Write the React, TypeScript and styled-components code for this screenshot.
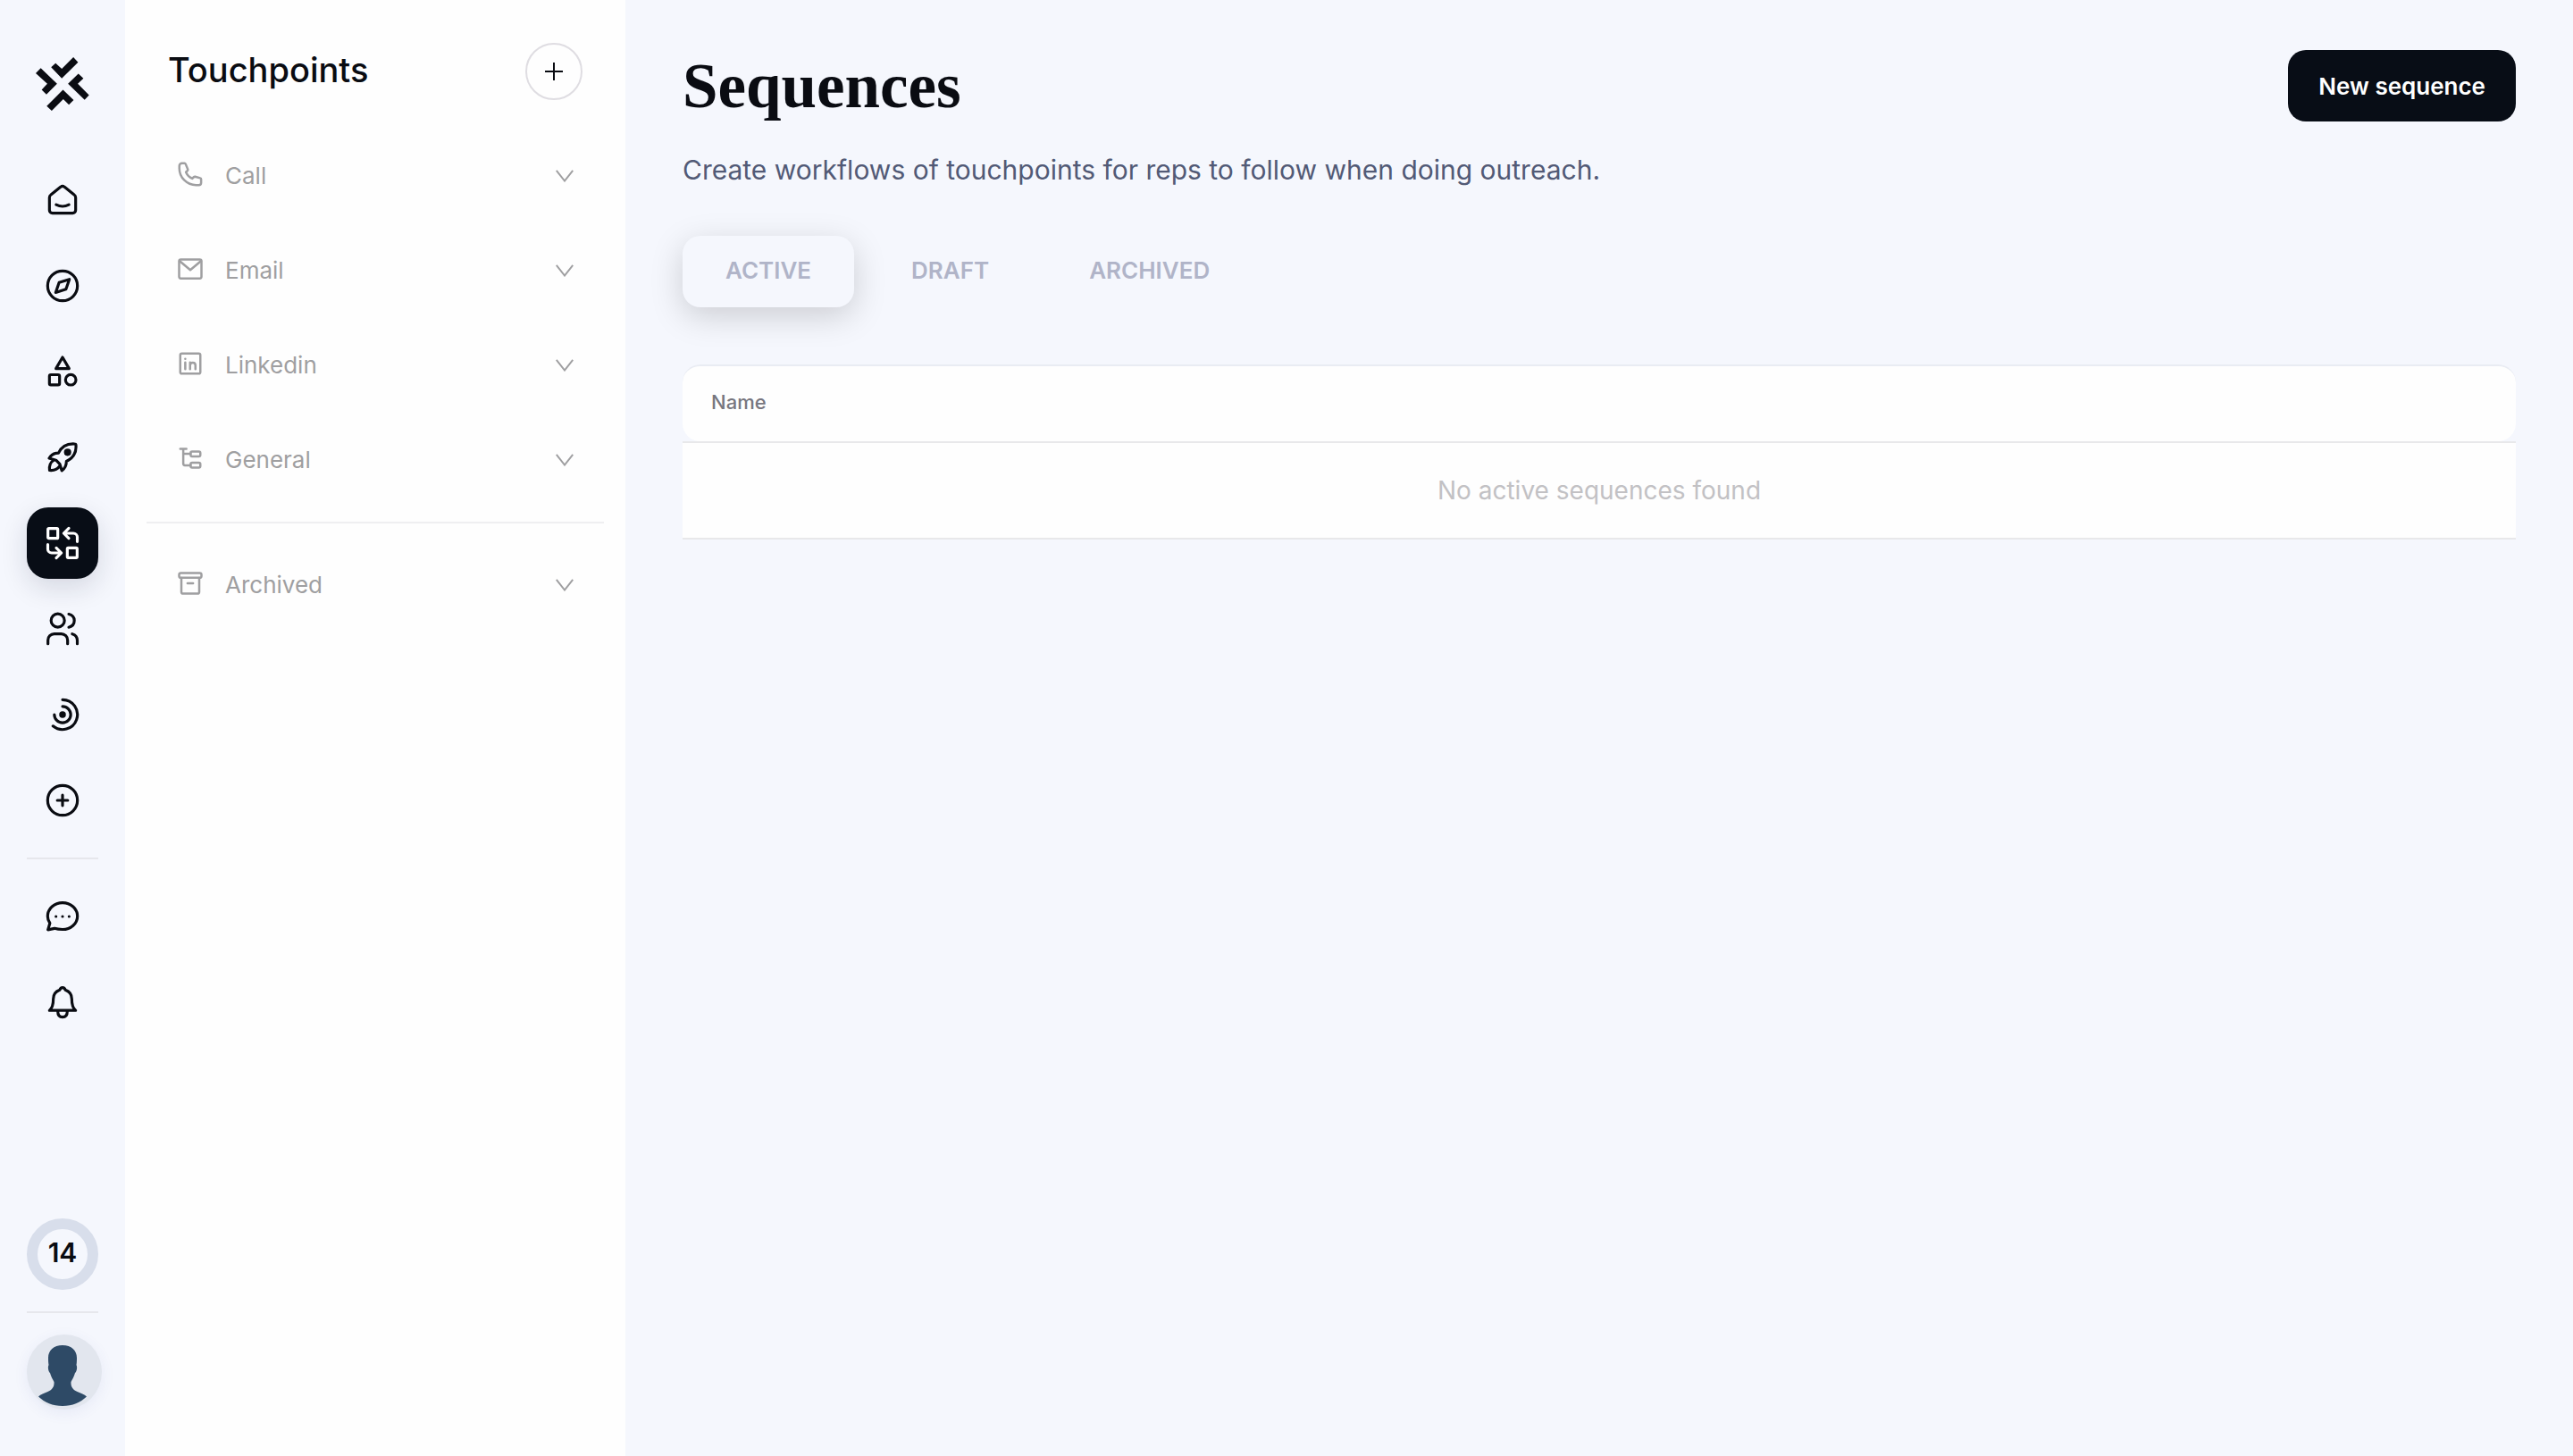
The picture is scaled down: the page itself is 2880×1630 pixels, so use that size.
import React from "react";
import styled, { createGlobalStyle, css } from "styled-components";

const color = {
  canvas: "#f5f7fd",
  panel: "#fefefe",
  ink: "#0a0c12",
  button: "#080d16",
  muted: "#9f9fa1",
  subtitle: "#525a76",
  tab: "#b0b4c8",
  line: "#e6e7ec",
};

const GlobalStyle = createGlobalStyle`
  *, *::before, *::after { box-sizing: border-box; }
  body {
    margin: 0;
    background: ${color.canvas};
    color: ${color.ink};
    font-family: Inter, "Liberation Sans", sans-serif;
  }
  button { font: inherit; border: 0; background: none; cursor: pointer; }
`;

const Shell = styled.div`
  display: flex;
  min-height: 100vh;
`;

/* ---------- navigation rail ---------- */

const Rail = styled.nav`
  flex: 0 0 140px;
  display: flex;
  flex-direction: column;
  align-items: center;
  padding: 64px 0 52px;
`;

const Logo = styled.a`
  display: block;
  height: 60px;
  margin-bottom: 60px;
  color: ${color.ink};
`;

const RailGroup = styled.ul`
  display: flex;
  flex-direction: column;
  gap: 16px;
  margin: 0;
  padding: 0;
  list-style: none;
`;

const RailLink = styled.a<{ $active?: boolean }>`
  display: flex;
  align-items: center;
  justify-content: center;
  width: 80px;
  height: 80px;
  border-radius: 24px;
  color: ${color.ink};
  ${(p) =>
    p.$active &&
    css`
      color: #fff;
      background: ${color.button};
      box-shadow: 0 10px 30px rgba(20, 28, 60, 0.14);
    `}
`;

const RailLine = styled.hr`
  width: 80px;
  height: 2px;
  margin: 24px 0;
  border: 0;
  background: ${color.line};
`;

const RailFoot = styled.div`
  display: flex;
  flex-direction: column;
  align-items: flex-start;
  width: 80px;
  margin-top: auto;
`;

const DaysRing = styled.button`
  width: 80px;
  height: 80px;
  padding: 0 0 4px;
  border: 12px solid #d8deeb;
  border-radius: 50%;
  font-size: 30px;
  font-weight: 600;
  line-height: 52px;
  color: ${color.ink};
`;

const Avatar = styled.button`
  width: 84px;
  height: 84px;
  padding: 0;
  border-radius: 50%;
  overflow: hidden;
  background: #e2e6ee;
  box-shadow: 0 4px 16px rgba(60, 80, 160, 0.08);
`;

/* ---------- touchpoints panel ---------- */

const Panel = styled.aside`
  flex: 0 0 560px;
  padding-top: 48px;
  background: ${color.panel};
`;

const PanelHeader = styled.header`
  display: flex;
  align-items: flex-start;
  justify-content: space-between;
  margin-bottom: 32px;
  padding: 0 48px;
`;

const PanelTitle = styled.h2`
  margin: 0;
  font-size: 38px;
  font-weight: 500;
  line-height: 60px;
`;

const RoundButton = styled.button`
  display: flex;
  align-items: center;
  justify-content: center;
  width: 64px;
  height: 64px;
  padding: 0;
  border: 2px solid #dfdde2;
  border-radius: 50%;
  color: ${color.ink};
`;

const PanelRow = styled.button`
  display: flex;
  align-items: center;
  width: 100%;
  height: 106px;
  padding: 0 58px;
  color: ${color.muted};
  text-align: left;
`;

const RowIcon = styled.span`
  display: flex;
  width: 54px;
  padding-bottom: 4px;
`;

const RowLabel = styled.span`
  flex: 1;
  font-size: 26px;
  line-height: 32px;
`;

const PanelLine = styled.hr`
  height: 2px;
  margin: 16px 24px;
  border: 0;
  background: #efeff1;
`;

/* ---------- main area ---------- */

const Main = styled.main`
  flex: 1;
  min-width: 0;
  padding: 56px 64px;
`;

const MainHeader = styled.header`
  display: flex;
  align-items: flex-start;
  justify-content: space-between;
`;

const Title = styled.h1`
  margin: 0;
  font-family: "Liberation Serif", serif;
  font-size: 71px;
  font-weight: 700;
  line-height: 80px;
`;

const PrimaryButton = styled.button`
  height: 80px;
  padding: 0 34px;
  border-radius: 20px;
  background: ${color.button};
  color: #fff;
  font-size: 26px;
  font-weight: 600;
`;

const Subtitle = styled.p`
  margin: 34px 0 54px;
  font-size: 30px;
  line-height: 40px;
  color: ${color.subtitle};
`;

const Tabs = styled.div`
  display: flex;
  gap: 16px;
  margin-bottom: 64px;
`;

const Tab = styled.button<{ $active?: boolean }>`
  height: 80px;
  padding: 0 48px 4px;
  border-radius: 20px;
  color: ${color.tab};
  font-size: 26px;
  font-weight: 600;
  ${(p) =>
    p.$active &&
    css`
      background: ${color.canvas};
      box-shadow: 0 10px 36px rgba(0, 0, 0, 0.17);
    `}
`;

const Table = styled.table`
  width: 100%;
  border-spacing: 0;
`;

const HeadCell = styled.th`
  height: 86px;
  padding: 0 32px 4px;
  border-top: 2px solid #e9ecf3;
  border-radius: 20px;
  background: ${color.panel};
  color: #77767f;
  font-size: 22px;
  font-weight: 500;
  text-align: left;
`;

const EmptyCell = styled.td`
  height: 110px;
  padding: 0 32px;
  border-top: 2px solid #e8e8ea;
  border-bottom: 2px solid #e8e8ea;
  background: ${color.panel};
  color: #c2c1c4;
  font-size: 28px;
  text-align: center;
`;

/* ---------- icons ---------- */

type IconProps = { size: number; stroke?: number; children: React.ReactNode };

const Icon = ({ size, stroke = 1.9, children }: IconProps) => (
  <svg
    width={size}
    height={size}
    viewBox="0 0 24 24"
    fill="none"
    stroke="currentColor"
    strokeWidth={stroke}
    strokeLinecap="round"
    strokeLinejoin="round"
    aria-hidden="true"
  >
    {children}
  </svg>
);

const LogoMark = () => (
  <svg width="60" height="60" viewBox="120 101 181 181" fill="currentColor" aria-hidden="true">
    <path d="M172 135l15-14 21 19 39-39 16 17-55 55z" />
    <path d="M120 155l17-17 55 53-36 36-16-16 19-20z" />
    <path d="M229 191l35-34 17 16-19 18 38 38-15 16z" />
    <path d="M157 266l55-55 36 35-16 16-19-19-39 39z" />
  </svg>
);

const homeIcon = (
  <>
    <path d="M3.2 10.3c0-.8.4-1.5 1-1.9l6.5-5.2a2 2 0 0 1 2.6 0l6.5 5.2c.6.4 1 1.1 1 1.9v8.500a2 2 0 0 1-2 2H5.200a2 2 0 0 1-2-2z" />
    <path d="M7.700 15.100c2.500 1.300 6.100 1.300 8.600 0" />
  </>
);
const compassIcon = (
  <>
    <circle cx="12" cy="12" r="10" />
    <path d="M16.600 7.600l-2.300 6.700-6.900 2.200 2.300-6.700z" />
  </>
);
const shapesIcon = (
  <>
    <path d="M12 2.400l4.400 7.600H7.600z" />
    <rect x="3.200" y="14.100" width="6.800" height="6.800" rx="1" />
    <circle cx="17.500" cy="17.500" r="3.500" />
  </>
);
const rocketIcon = (
  <>
    <path d="M9.300 9.100C11.300 4.900 14.600 2.600 20.200 3c.5 0 .8.300.8.800.4 5.400-2.200 8.800-6.400 10.900 0 2.500-.9 4.700-3.100 6.200l-1.400-4.500-2.500-2.500L3 12.600c1.400-2.300 3.600-3.500 6.300-3.500z" />
    <path d="M5.800 14.100C3.600 15.500 3 18.200 3.300 20.700c2.500.2 5.200-.4 6.600-2.600" />
    <circle cx="15.400" cy="8.600" r="1.500" fill="currentColor" />
  </>
);
const sequenceIcon = (
  <>
    <rect x="2.200" y="2.200" width="6.600" height="6.600" rx=".6" />
    <rect x="15.200" y="15.200" width="6.600" height="6.600" rx=".6" />
    <path d="M16.200 2l-3.400 3.400 3.400 3.400M13 5.400h6.300a2.600 2.600 0 0 1 2.600 2.600v3" />
    <path d="M7.800 22l3.400-3.400-3.400-3.400M11 18.600H4.700A2.600 2.600 0 0 1 2.100 16v-3" />
  </>
);
const usersIcon = (
  <>
    <circle cx="8.800" cy="6.400" r="4.500" />
    <path d="M2.200 22v-2.400a4.200 4.200 0 0 1 4.200-4.200h4.800a4.200 4.200 0 0 1 4.200 4.200V22" />
    <path d="M16.200 2.100c2.300.6 3.700 2.300 3.700 4.300s-1.400 3.900-3.700 4.500M18.500 15.400c2.100.6 3.400 2.300 3.400 4.400V22" />
  </>
);
const radarIcon = (
  <>
    <path d="M12 2a10 10 0 1 1-6.400 17.700" />
    <path d="M12 6.500A5.500 5.500 0 1 1 6.500 12" />
    <circle cx="12" cy="12" r="1.300" fill="currentColor" />
  </>
);
const plusCircleIcon = (
  <>
    <circle cx="12" cy="12" r="10" />
    <path d="M12 8.500v7M8.500 12h7" />
  </>
);
const chatIcon = (
  <>
    <path d="M12 20.700c5.500 0 10-3.900 10-8.900s-4.500-9-10-9-10 4-10 9c0 1.700.5 3.300 1.500 4.700L2.200 20.900l4.400-.9c1.600.5 3.500.7 5.400.7z" />
    <path d="M7.600 12h.01M12 12h.01M16.400 12h.01" />
  </>
);
const bellIcon = (
  <>
    <path d="M12 2.200c-1 0-1.600.6-1.900 1.600C7.400 4.800 5.800 7 5.800 9.800c0 3.900-.5 6.100-2.600 7.700h17.600c-2.100-1.600-2.600-3.800-2.600-7.700 0-2.800-1.600-5-4.300-6-.3-1-.9-1.600-1.900-1.600z" />
    <path d="M8.800 17.800c0 2.600 1.200 4.200 3.200 4.200s3.200-1.600 3.200-4.200" />
  </>
);

const phoneIcon = (
  <path d="M2.200 6.700c0 8.300 6.800 15 15 15h2.300a2.200 2.200 0 0 0 2.200-2.200v-2.900c0-.5-.3-1-.8-1.100l-4.600-1.300c-.5-.1-.9.100-1.200.4l-1.300 1.300a11 11 0 0 1-5.700-5.700l1.300-1.300c.3-.3.500-.7.400-1.200L7.900 3.100c-.2-.5-.6-.9-1.100-.9H4.500a2.300 2.300 0 0 0-2.300 2.300z" />
);
const mailIcon = (
  <>
    <rect x="2" y="3.500" width="20" height="17" rx="1.500" />
    <path d="M2.500 5l9.500 8 9.500-8" />
  </>
);
const linkedinIcon = (
  <>
    <rect x="3" y="3" width="18" height="18" rx="1.500" />
    <path d="M7.500 17v-6M7.500 7.800v.01M11.800 17v-6M11.800 13.500c0-3.200 4.800-3.200 4.800 0V17" />
  </>
);
const treeIcon = (
  <>
    <path d="M3 3.500h5.500M5.700 3.500v13.300a1.500 1.500 0 0 0 1.500 1.500h5M5.700 8h6.500" />
    <rect x="12.300" y="6" width="8.700" height="4.300" rx="1.300" />
    <rect x="12.300" y="16" width="8.700" height="4.300" rx="1.300" />
  </>
);
const archiveIcon = (
  <>
    <rect x="2" y="2.800" width="20" height="4.200" rx="1.500" />
    <path d="M4 7.200v12.500a1.500 1.500 0 0 0 1.500 1.500h13a1.500 1.500 0 0 0 1.500-1.500V7.200M9.500 12h5" />
  </>
);

const Chevron = () => (
  <svg width="20" height="14" viewBox="0 0 20 14" fill="none" stroke="currentColor" strokeWidth="2" aria-hidden="true">
    <path d="M.8.800L10 12.500 19.200.8" />
  </svg>
);

/* ---------- data ---------- */

const mainNav = [
  { name: "Home", icon: homeIcon },
  { name: "Explore", icon: compassIcon },
  { name: "Library", icon: shapesIcon },
  { name: "Launch", icon: rocketIcon },
  { name: "Sequences", icon: sequenceIcon, active: true },
  { name: "People", icon: usersIcon },
  { name: "Signals", icon: radarIcon },
  { name: "Add", icon: plusCircleIcon },
];

const helpNav = [
  { name: "Chat", icon: chatIcon },
  { name: "Notifications", icon: bellIcon },
];

const touchpoints = [
  { name: "Call", icon: phoneIcon },
  { name: "Email", icon: mailIcon },
  { name: "Linkedin", icon: linkedinIcon },
  { name: "General", icon: treeIcon },
];

const tabs = ["ACTIVE", "DRAFT", "ARCHIVED"];

type Entry = { name: string; icon: React.ReactNode; active?: boolean };

const NavGroup = ({ items }: { items: Entry[] }) => (
  <RailGroup>
    {items.map((item) => (
      <li key={item.name}>
        <RailLink
          href="#"
          $active={item.active}
          aria-label={item.name}
          aria-current={item.active ? "page" : undefined}
        >
          <Icon size={40}>{item.icon}</Icon>
        </RailLink>
      </li>
    ))}
  </RailGroup>
);

const TouchpointRow = ({ name, icon }: Entry) => (
  <PanelRow type="button" aria-expanded={false}>
    <RowIcon>
      <Icon size={30} stroke={2}>
        {icon}
      </Icon>
    </RowIcon>
    <RowLabel>{name}</RowLabel>
    <Chevron />
  </PanelRow>
);

export default function App() {
  const [tab, setTab] = React.useState("ACTIVE");

  return (
    <>
      <GlobalStyle />
      <Shell>
        <Rail aria-label="Main">
          <Logo href="#" aria-label="Start page">
            <LogoMark />
          </Logo>
          <NavGroup items={mainNav} />
          <RailLine />
          <NavGroup items={helpNav} />
          <RailFoot>
            <DaysRing type="button">14</DaysRing>
            <RailLine />
            <Avatar type="button" aria-label="Account">
              <svg width="84" height="84" viewBox="0 0 84 84" aria-hidden="true">
                <path
                  fill="#2e4a66"
                  d="M40 12c-10 0-16 6-16 14 0 3 0 5 .5 8-1.500 3 0 8 1.500 9 1 4 3 7 4.500 10 .5 6-2.500 9-7 11-4 2-8 3-10.500 5.500C20 76 29 80 40 80s20-4 27-10.500C64.500 67 60.500 66 56.500 64c-4.500-2-7.500-5-7-11 1.500-3 3.500-6 4.500-10 1.500-1 3-6 1.500-9 .5-3 .5-5 .5-8 0-8-6-14-16-14z"
                />
              </svg>
            </Avatar>
          </RailFoot>
        </Rail>

        <Panel>
          <PanelHeader>
            <PanelTitle>Touchpoints</PanelTitle>
            <RoundButton type="button" aria-label="Add touchpoint">
              <svg width="20" height="20" viewBox="0 0 20 20" stroke="currentColor" strokeWidth="2" aria-hidden="true">
                <path d="M10 0v20M0 10h20" />
              </svg>
            </RoundButton>
          </PanelHeader>
          {touchpoints.map((t) => (
            <TouchpointRow key={t.name} {...t} />
          ))}
          <PanelLine />
          <TouchpointRow name="Archived" icon={archiveIcon} />
        </Panel>

        <Main>
          <MainHeader>
            <Title>Sequences</Title>
            <PrimaryButton type="button">New sequence</PrimaryButton>
          </MainHeader>
          <Subtitle>Create workflows of touchpoints for reps to follow when doing outreach.</Subtitle>
          <Tabs role="tablist">
            {tabs.map((name) => (
              <Tab
                key={name}
                type="button"
                role="tab"
                aria-selected={tab === name}
                $active={tab === name}
                onClick={() => setTab(name)}
              >
                {name}
              </Tab>
            ))}
          </Tabs>
          <Table>
            <thead>
              <tr>
                <HeadCell scope="col">Name</HeadCell>
              </tr>
            </thead>
            <tbody>
              <tr>
                <EmptyCell>No {tab.toLowerCase()} sequences found</EmptyCell>
              </tr>
            </tbody>
          </Table>
        </Main>
      </Shell>
    </>
  );
}
